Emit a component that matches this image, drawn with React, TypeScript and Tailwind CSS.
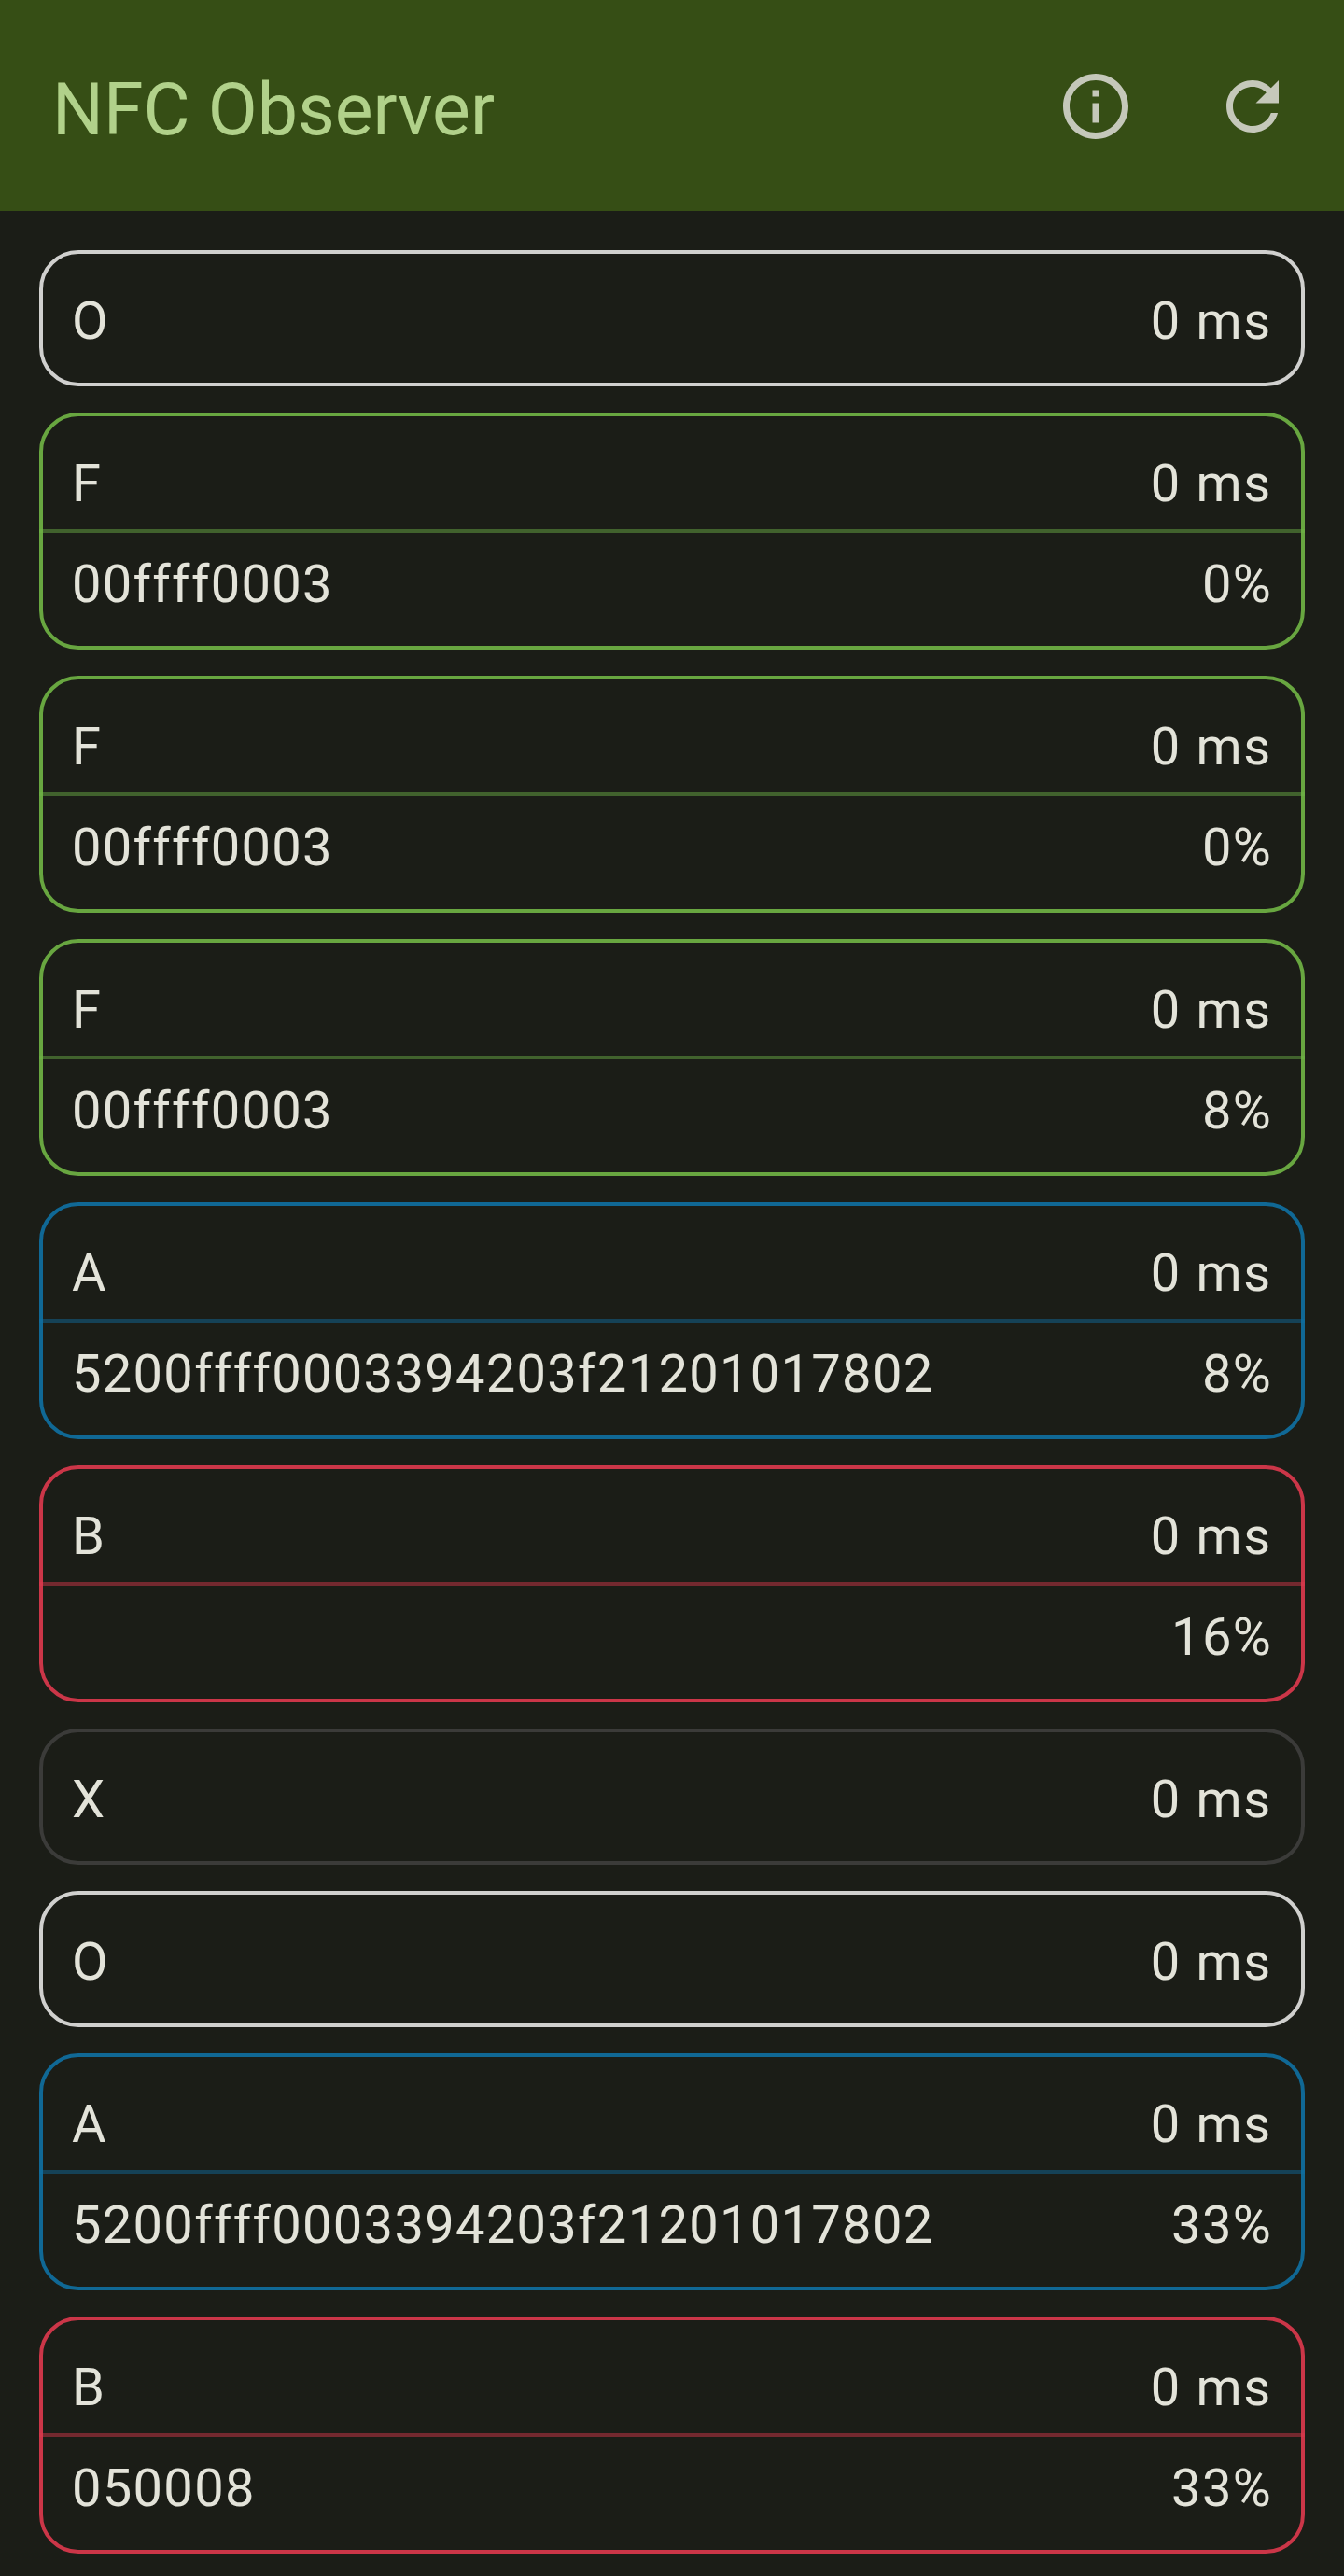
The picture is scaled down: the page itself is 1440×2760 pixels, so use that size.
type Kind = "O" | "F" | "A" | "B" | "X";

interface Entry {
  kind: Kind;
  data?: string;
  gain?: string;
}

const entries: Entry[] = [
  { kind: "O" },
  { kind: "F", data: "00ffff0003", gain: "0%" },
  { kind: "F", data: "00ffff0003", gain: "0%" },
  { kind: "F", data: "00ffff0003", gain: "8%" },
  { kind: "A", data: "5200ffff0003394203f21201017802", gain: "8%" },
  { kind: "B", data: "", gain: "16%" },
  { kind: "X" },
  { kind: "O" },
  { kind: "A", data: "5200ffff0003394203f21201017802", gain: "33%" },
  { kind: "B", data: "050008", gain: "33%" },
];

const borders: Record<Kind, string> = {
  O: "border-[#d0d0ce]",
  F: "border-[#68a640]",
  A: "border-[#106895]",
  B: "border-[#cb3648]",
  X: "border-[#3b3b39]",
};

const dividers: Record<Kind, string> = {
  O: "bg-[#e4e4e2]/46",
  F: "bg-[#70b548]/46",
  A: "bg-[#0f70a3]/46",
  B: "bg-[#df394d]/46",
  X: "bg-[#3f3f3d]/46",
};

function EntryCard({ kind, data, gain }: Entry) {
  return (
    <li className={`rounded-[42px] border-4 ${borders[kind]}`}>
      <div
        className={`flex items-center justify-between px-[31px] ${
          gain === undefined ? "h-[138px] pt-1.5" : "h-[121px] pt-[23px]"
        }`}
      >
        <span>{kind}</span>
        <span>0 ms</span>
      </div>
      {gain !== undefined && (
        <>
          <div className={`-mx-1 h-1 ${dividers[kind]}`} />
          <div className="flex h-[121px] items-center justify-between px-[31px] pb-[11px] tracking-[1.31px]">
            <span>{data}</span>
            <span>{gain}</span>
          </div>
        </>
      )}
    </li>
  );
}

export default function App() {
  return (
    <div className="h-[2760px] w-[1440px] overflow-hidden bg-[#1b1d17] font-['Roboto',sans-serif] text-[#e3e3d9]">
      <header className="flex h-[226px] items-start justify-between bg-[#364e15] pr-14 pl-14">
        <h1 className="mt-[73px] text-[77px] leading-[90px] font-normal text-[#b1d18a]">NFC Observer</h1>
        <div className="mt-[72px] flex gap-[84px] text-[#c5c8ba]">
          <button aria-label="Info">
            <svg className="size-[84px]" viewBox="0 0 24 24" fill="currentColor">
              <path d="M11 7h2v2h-2zm0 4h2v6h-2zm1-9C6.480 2 2 6.480 2 12s4.480 10 10 10 10-4.480 10-10S17.520 2 12 2zm0 18c-4.410 0-8-3.590-8-8s3.590-8 8-8 8 3.590 8 8-3.590 8-8 8z" />
            </svg>
          </button>
          <button aria-label="Refresh">
            <svg className="size-[84px]" viewBox="0 0 24 24" fill="currentColor">
              <path d="M17.650 6.350C16.200 4.900 14.210 4 12 4c-4.420 0-7.990 3.580-7.990 8s3.570 8 7.990 8c3.730 0 6.840-2.550 7.730-6h-2.080c-.820 2.330-3.040 4-5.650 4-3.310 0-6-2.690-6-6s2.690-6 6-6c1.660 0 3.140.690 4.220 1.780L13 11h7V4l-2.350 2.350z" />
            </svg>
          </button>
        </div>
      </header>
      <ul className="flex flex-col gap-7 px-[42px] pt-[42px] text-[56px] leading-[84px] tracking-[1.75px]">
        {entries.map((entry, index) => (
          <EntryCard key={index} {...entry} />
        ))}
      </ul>
    </div>
  );
}
